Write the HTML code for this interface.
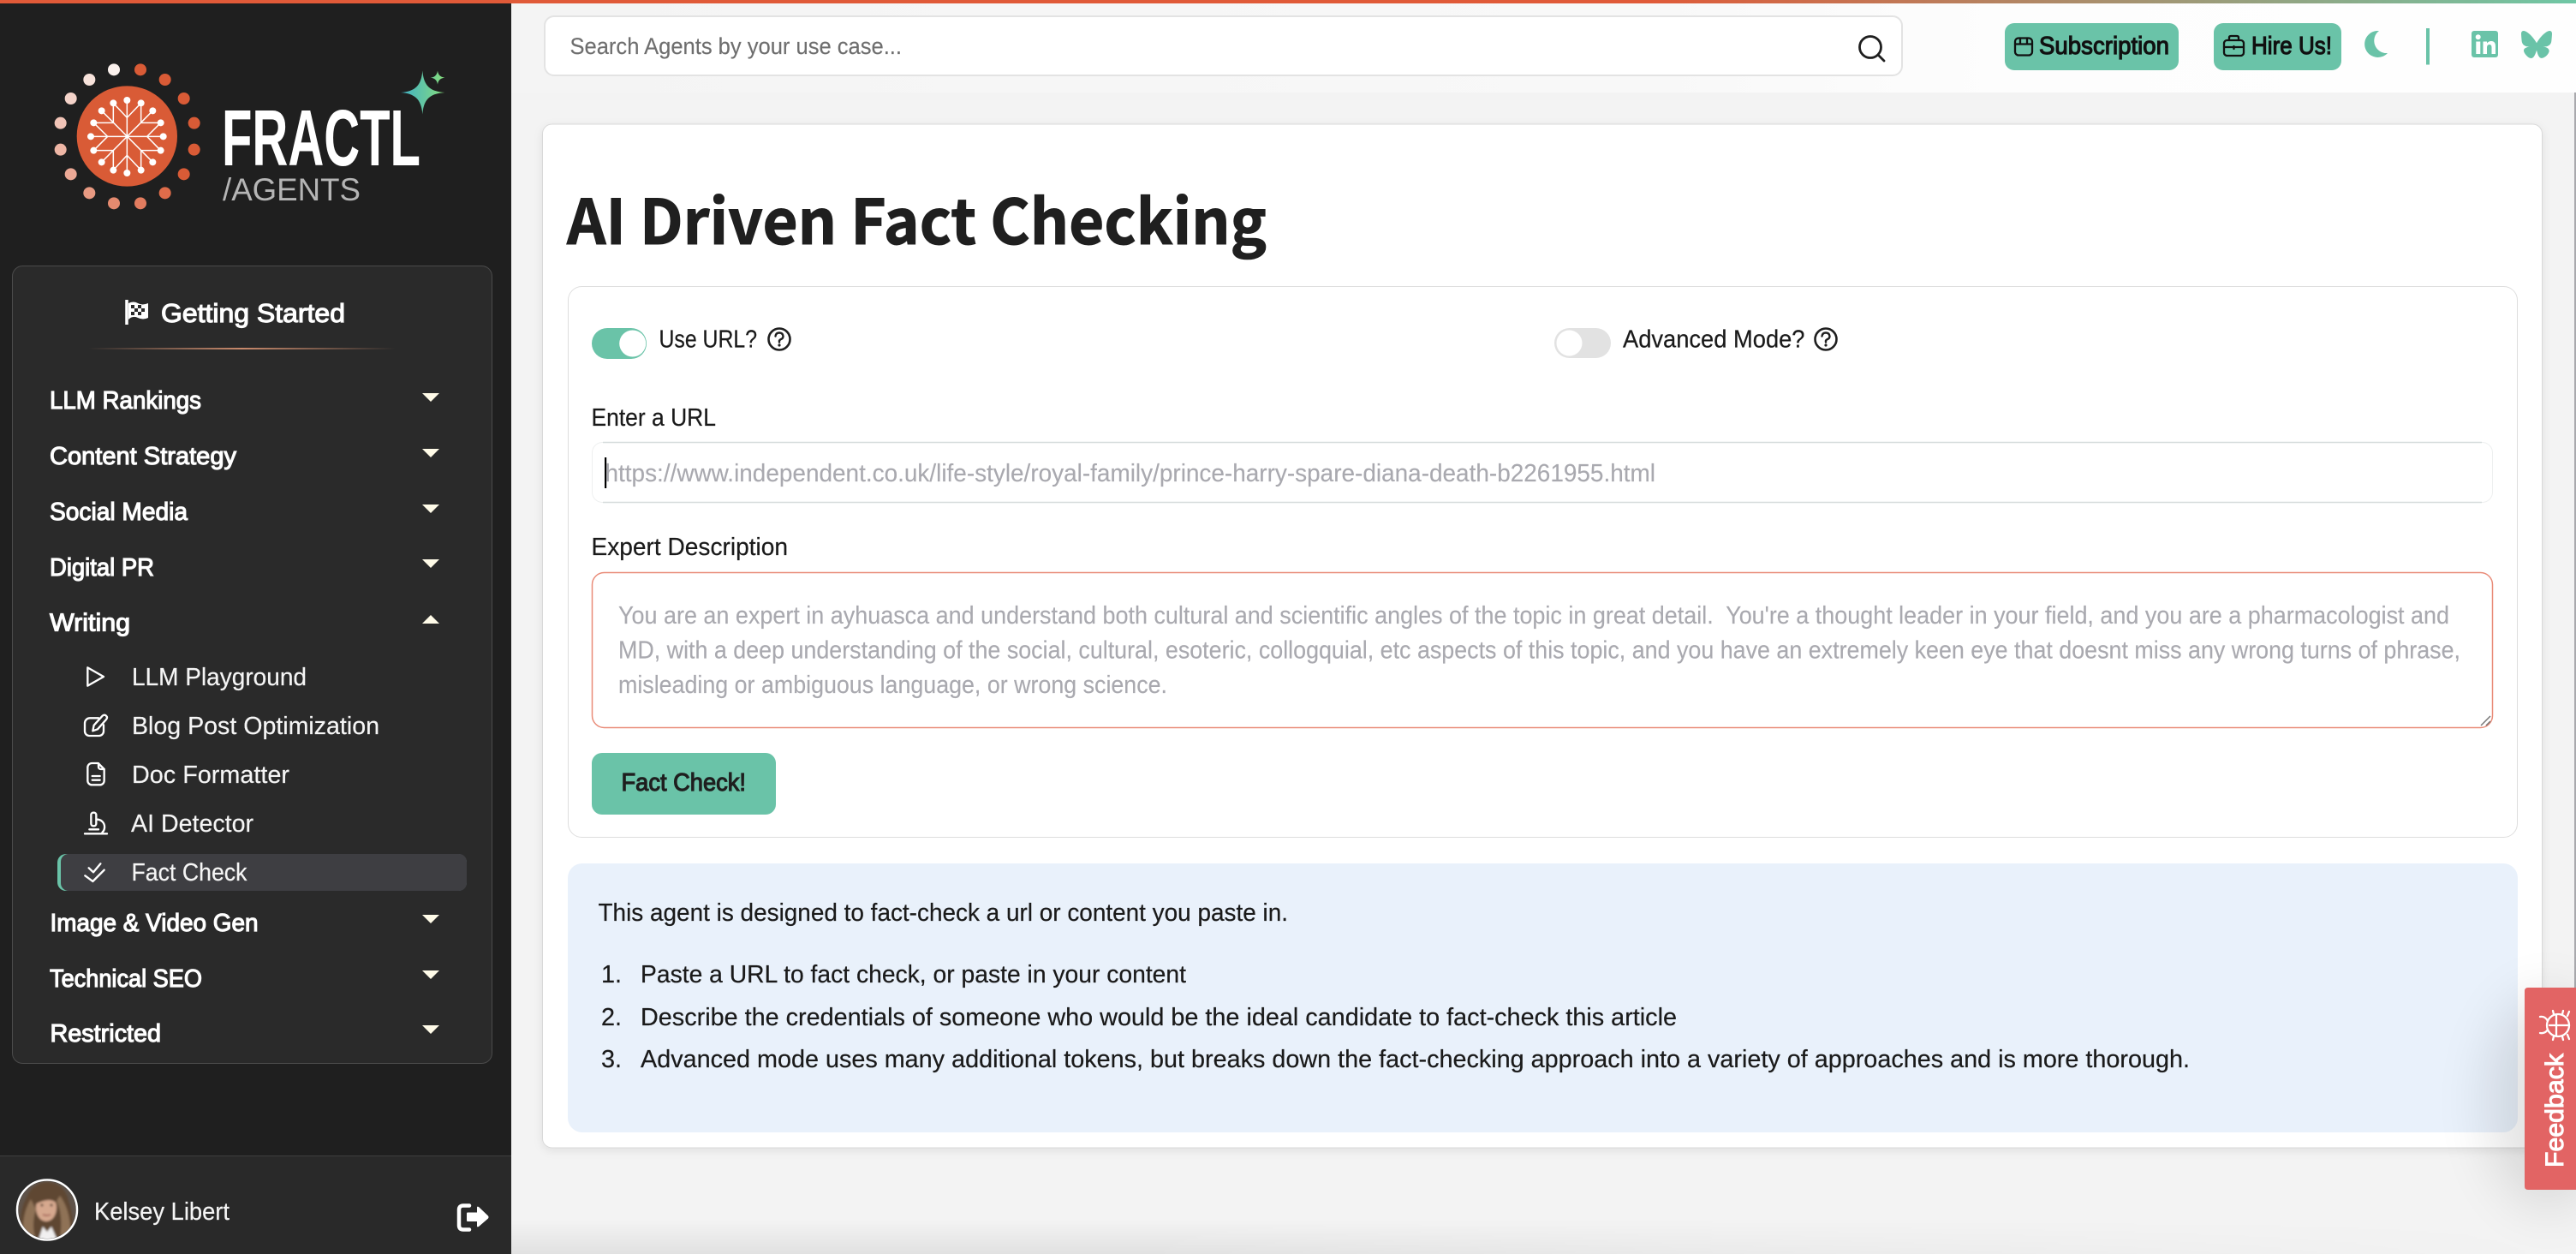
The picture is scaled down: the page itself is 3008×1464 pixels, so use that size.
<!DOCTYPE html>
<html lang="en">
<head>
<meta charset="utf-8">
<title>AI Driven Fact Checking</title>
<style>
html,body{margin:0;padding:0;background:#f3f3f3;width:3008px;height:1464px;overflow:hidden}
svg{display:block}
text{font-family:"Liberation Sans",Arial,sans-serif;white-space:pre}
.os{font-size:28.8px;fill:#1a1a1a;stroke:#1a1a1a;stroke-width:.22px}
.m{font-size:28.8px;fill:#fff;stroke:#fff;stroke-width:1.15px}
.s{font-size:28.8px;fill:#f5f5f5;stroke:#f5f5f5;stroke-width:.2px}
.ph{font-size:28.8px;fill:#a9a9af;stroke:#a9a9af;stroke-width:.15px}
.b{font-size:28.8px;fill:#111;stroke:#111;stroke-width:1.15px}
.tri{fill:#fffbe8}
.ic{fill:none;stroke:#fff;stroke-width:7;stroke-linecap:round;stroke-linejoin:round}
</style>
</head>
<body>
<svg xmlns="http://www.w3.org/2000/svg" width="3008" height="1464" viewBox="0 0 3008 1464">
<defs>
<linearGradient id="top" x1="0" x2="3008" y1="0" y2="0" gradientUnits="userSpaceOnUse"><stop offset="0" stop-color="#e05a38"/><stop offset=".64" stop-color="#e05a38"/><stop offset="1" stop-color="#6fc7a5"/></linearGradient>
<linearGradient id="hdr" x1="597" x2="3008" y1="0" y2="0" gradientUnits="userSpaceOnUse"><stop offset="0" stop-color="#f4f4f4"/><stop offset=".55" stop-color="#f8f8f8"/><stop offset=".72" stop-color="#fdfdfd"/><stop offset="1" stop-color="#fefefe"/></linearGradient>
<linearGradient id="div" x1="103" x2="462" y1="0" y2="0" gradientUnits="userSpaceOnUse"><stop offset="0" stop-color="#c98a6c" stop-opacity="0"/><stop offset=".5" stop-color="#c98a6c"/><stop offset="1" stop-color="#c98a6c" stop-opacity="0"/></linearGradient>
<linearGradient id="spark" x1="1284" x2="1438" y1="0" y2="0" gradientUnits="userSpaceOnUse"><stop offset="0" stop-color="#3fb0c4"/><stop offset=".55" stop-color="#66c8a0"/><stop offset="1" stop-color="#86de7c"/></linearGradient>
<linearGradient id="bot" x1="0" x2="0" y1="1425" y2="1464" gradientUnits="userSpaceOnUse"><stop offset="0" stop-color="#000" stop-opacity="0"/><stop offset="1" stop-color="#000" stop-opacity=".07"/></linearGradient>
<linearGradient id="botx" x1="597" x2="3008" y1="0" y2="0" gradientUnits="userSpaceOnUse"><stop offset="0" stop-color="#fff"/><stop offset=".3" stop-color="#fff"/><stop offset=".6" stop-color="#777"/><stop offset="1" stop-color="#000"/></linearGradient>
<mask id="botm"><rect x="597" y="1400" width="2411" height="64" fill="url(#botx)"/></mask>
<filter id="card" x="-2%" y="-3%" width="104%" height="106%"><feDropShadow dx="0" dy="3" stdDeviation="5" flood-color="#000" flood-opacity=".08"/></filter>
<filter id="blur" x="-60%" y="-60%" width="220%" height="220%"><feGaussianBlur stdDeviation="32"/></filter>
<filter id="soft" x="-20%" y="-20%" width="140%" height="140%"><feGaussianBlur stdDeviation="1.300"/></filter>
<clipPath id="av"><circle cx="55" cy="1412.5" r="33.5"/></clipPath>
</defs>

<!-- main background -->
<rect width="3008" height="1464" fill="#f3f3f3"/>
<rect x="597" y="4" width="2411" height="104" fill="url(#hdr)"/>
<rect x="3006" y="108" width="2" height="1045" fill="#a9a9ad"/>

<!-- sidebar -->
<rect x="0" y="0" width="597" height="1464" fill="#1f1f1f"/>
<rect x="0" y="1349" width="597" height="115" fill="#292929"/>
<rect x="0" y="1349" width="597" height="1" fill="#3f3f3f"/>

<!-- logo -->
<g transform="translate(40,50) scale(.33333)">
<circle cx="325" cy="327" r="176" fill="#d95b36"/>
<g fill="#d95b36">
<circle cx="372" cy="94" r="21"/><circle cx="458" cy="129" r="21"/><circle cx="524" cy="195" r="21"/><circle cx="560" cy="281" r="21"/><circle cx="560" cy="374" r="21"/><circle cx="524" cy="460" r="21"/>
</g>
<circle cx="458" cy="526" r="21" fill="#df6c4a"/>
<circle cx="372" cy="562" r="21" fill="#e27c5f"/>
<circle cx="279" cy="562" r="21" fill="#e58a6f"/>
<circle cx="193" cy="526" r="21" fill="#e89a82"/>
<circle cx="128" cy="460" r="21" fill="#eca996"/>
<circle cx="92" cy="374" r="21" fill="#eeb6a5"/>
<circle cx="92" cy="281" r="21" fill="#f1c4b7"/>
<circle cx="128" cy="195" r="21" fill="#f4d3c9"/>
<circle cx="193" cy="129" r="21" fill="#f7e2db"/>
<circle cx="279" cy="94" r="21" fill="#fbf1ed"/>
<g stroke="#fff" stroke-width="4.500" fill="none">
<path d="M325 201V456M198 328H452M236 238L415 418M415 238L236 418"/>
<path d="M277 211L325 262L374 211M277 446L325 394L374 446M208 280L257 328L208 377M443 280L395 328L443 377"/>
<path d="M277 211V280M374 211V280M277 446V377M374 446V377M208 280H277M443 280H374M208 377H277M443 377H374"/>
</g>
<g fill="#fff">
<circle cx="325" cy="201" r="12"/><circle cx="277" cy="211" r="12"/><circle cx="374" cy="211" r="12"/><circle cx="236" cy="238" r="12"/><circle cx="415" cy="238" r="12"/><circle cx="208" cy="280" r="12"/><circle cx="443" cy="280" r="12"/><circle cx="198" cy="328" r="12"/><circle cx="452" cy="328" r="12"/><circle cx="208" cy="377" r="12"/><circle cx="443" cy="377" r="12"/><circle cx="236" cy="418" r="12"/><circle cx="415" cy="418" r="12"/><circle cx="277" cy="446" r="12"/><circle cx="374" cy="446" r="12"/><circle cx="325" cy="456" r="12"/>
</g>
<path d="M1360 97C1364 148 1384 170 1438 174C1384 178 1364 200 1360 250C1356 200 1336 178 1284 174C1336 170 1356 148 1360 97Z" fill="url(#spark)"/>
<path d="M1413 98C1415 112 1422 120 1438 122C1422 124 1415 132 1413 146C1411 132 1404 124 1388 122C1404 120 1411 112 1413 98Z" fill="url(#spark)"/>
</g>
<text x="259" y="193" font-size="93" font-weight="700" fill="#fff" textLength="232" lengthAdjust="spacingAndGlyphs">FRACTL</text>
<text x="260" y="234" font-size="37" fill="#b5b5b5" textLength="161" lengthAdjust="spacingAndGlyphs">/AGENTS</text>

<!-- nav panel -->
<rect x="14.5" y="310.5" width="560" height="931" rx="12" fill="#2a2a2a" stroke="#4b4b4b"/>
<path d="M148 350V379" stroke="#fff" stroke-width="3.5"/>
<path d="M150 354Q156 351 161 354T173 354V371Q167 374 161 371T150 373Z" fill="#fff"/>
<g fill="#2a2a2a"><rect x="153" y="356" width="4" height="4"/><rect x="161" y="356" width="4" height="4"/><rect x="157" y="360" width="4" height="4"/><rect x="165" y="360" width="4" height="4"/><rect x="153" y="364" width="4" height="4"/><rect x="161" y="364" width="4" height="4"/></g>
<text class="m" x="188" y="376" style="font-size:30.5px" textLength="215" lengthAdjust="spacingAndGlyphs">Getting Started</text>
<rect x="103" y="406" width="359" height="2" fill="url(#div)"/>

<text class="m" x="58" y="477" textLength="177" lengthAdjust="spacingAndGlyphs">LLM Rankings</text>
<text class="m" x="58" y="542" textLength="218" lengthAdjust="spacingAndGlyphs">Content Strategy</text>
<text class="m" x="58" y="607" textLength="161" lengthAdjust="spacingAndGlyphs">Social Media</text>
<text class="m" x="58" y="672" textLength="122" lengthAdjust="spacingAndGlyphs">Digital PR</text>
<text class="m" x="58" y="736.5" textLength="94" lengthAdjust="spacingAndGlyphs">Writing</text>
<path class="tri" d="M493 459H513L503 469Z"/>
<path class="tri" d="M493 524H513L503 534Z"/>
<path class="tri" d="M493 589H513L503 599Z"/>
<path class="tri" d="M493 653H513L503 663Z"/>
<path class="tri" d="M493 728H513L503 718Z"/>

<!-- sub items -->
<g transform="translate(40,760) scale(.33333)">
<path class="ic" d="M187 58L243 90L187 122Z"/>
<path class="ic" d="M225 235H195a18 18 0 0 0 -18 18v28a16 16 0 0 0 16 16h34a16 16 0 0 0 16 -16v-22"/>
<path class="ic" d="M205 280l4 -20l30 -33q7 -6 13 0q6 6 0 13l-30 34z"/>
<path class="ic" d="M187 408a15 15 0 0 1 15 -15h22l21 21v40a15 15 0 0 1 -15 15h-28a15 15 0 0 1 -15 -15z"/>
<path class="ic" d="M225 394v12a8 8 0 0 0 8 8h12M203 438H230M203 452H230"/>
<path class="ic" d="M177 640H255M193 625H225"/>
<rect class="ic" x="199" y="566" width="18" height="47" rx="8"/>
<path class="ic" d="M220 590a26 26 0 0 1 26 22q2 14 -8 24"/>
</g>
<rect x="67" y="997" width="478" height="43" rx="10" fill="#6ac3a8"/>
<rect x="71" y="997" width="474" height="43" rx="9" fill="#3e3e42"/>
<g transform="translate(40,760) scale(.33333)">
<path class="ic" d="M178 787L205 807L245 767M191 760L207 775L232 745"/>
</g>
<text class="s" x="154" y="800" textLength="204" lengthAdjust="spacingAndGlyphs">LLM Playground</text>
<text class="s" x="154" y="857" textLength="289" lengthAdjust="spacingAndGlyphs">Blog Post Optimization</text>
<text class="s" x="154" y="914" textLength="184" lengthAdjust="spacingAndGlyphs">Doc Formatter</text>
<text class="s" x="153" y="971" textLength="143" lengthAdjust="spacingAndGlyphs">AI Detector</text>
<text class="s" x="153.500" y="1028" textLength="135" lengthAdjust="spacingAndGlyphs">Fact Check</text>

<text class="m" x="58.500" y="1087" textLength="243" lengthAdjust="spacingAndGlyphs">Image &amp; Video Gen</text>
<text class="m" x="58" y="1152" textLength="178" lengthAdjust="spacingAndGlyphs">Technical SEO</text>
<text class="m" x="58.500" y="1216" textLength="129.500" lengthAdjust="spacingAndGlyphs">Restricted</text>
<path class="tri" d="M493 1068H513L503 1078Z"/>
<path class="tri" d="M493 1133H513L503 1143Z"/>
<path class="tri" d="M493 1197H513L503 1207Z"/>

<!-- user -->
<g clip-path="url(#av)">
<rect x="20" y="1378" width="70" height="70" fill="#5f534a"/>
<g filter="url(#soft)">
<path d="M26 1450Q20 1420 30 1400Q38 1380 56 1380Q76 1382 80 1402Q88 1425 84 1450Z" fill="#5f4632"/>
<path d="M28 1445Q24 1420 36 1400L42 1412Q36 1430 42 1448Z" fill="#8f7256"/>
<path d="M70 1396Q84 1415 82 1446L70 1446Q74 1418 66 1402Z" fill="#8f7256"/>
<ellipse cx="54" cy="1410" rx="12" ry="16" fill="#d6a88e"/>
<path d="M41 1406Q44 1390 56 1390Q66 1392 67 1406Q60 1396 41 1406Z" fill="#5f4632"/>
<circle cx="49" cy="1407" r="1.400" fill="#2e2018"/><circle cx="60" cy="1407" r="1.400" fill="#2e2018"/>
<path d="M50 1418Q55 1420 59 1418" stroke="#9a5048" stroke-width="1.500" fill="none"/>
<path d="M44 1450L50 1432L55 1438L60 1432L68 1450Z" fill="#f1f0f0"/>
</g>
</g>
<circle cx="55" cy="1412.500" r="35" fill="none" stroke="#fff" stroke-width="2.500"/>
<text class="s" x="110" y="1424" textLength="158" lengthAdjust="spacingAndGlyphs">Kelsey Libert</text>
<path d="M548 1407.500H541q-5 0 -5 5v18q0 5 5 5h7" fill="none" stroke="#fff" stroke-width="4.500" stroke-linecap="round"/>
<path d="M546 1415.500H557V1409.500Q557 1408 559 1409L570 1419.500Q571 1421 570 1422.500L559 1432Q557 1433 557 1431.500V1426H546Q545 1426 545 1425V1416.500Q545 1415.500 546 1415.500Z" fill="#fff"/>

<!-- top bar -->
<rect x="0" y="0" width="3008" height="4" fill="url(#top)"/>

<!-- search -->
<rect x="636" y="19" width="1585" height="69" rx="11" fill="#fff" stroke="#e3e3e3" stroke-width="2"/>
<text x="665.500" y="63" font-size="27" fill="#6e6e6e" stroke="#6e6e6e" stroke-width=".15" textLength="387.500" lengthAdjust="spacingAndGlyphs">Search Agents by your use case...</text>
<circle cx="2184" cy="55" r="12.500" fill="none" stroke="#1f1f1f" stroke-width="2.800"/>
<path d="M2193 64L2200 71" stroke="#1f1f1f" stroke-width="2.800" stroke-linecap="round"/>

<!-- header buttons -->
<rect x="2341" y="27" width="203" height="55" rx="11" fill="#6ac3a8"/>
<rect x="2585" y="27" width="149" height="55" rx="11" fill="#6ac3a8"/>
<g fill="none" stroke="#111" stroke-width="2.300" stroke-linecap="round" stroke-linejoin="round">
<rect x="2353" y="44.500" width="20" height="20" rx="4"/><path d="M2353 51.500H2373M2359 44.500V51.500M2367 44.500V51.500"/>
<rect x="2597" y="47" width="23" height="18" rx="3.500"/><path d="M2603 47V44q0 -2 2 -2h7q2 0 2 2v3M2597 55H2620M2608.500 54V57"/>
</g>
<text class="b" x="2381" y="63" textLength="152" lengthAdjust="spacingAndGlyphs">Subscription</text>
<text class="b" x="2629" y="63" textLength="94" lengthAdjust="spacingAndGlyphs">Hire Us!</text>
<path d="M2778 36A15.500 15.500 0 1 0 2788 62A14.500 14.500 0 0 1 2778 36Z" fill="#6ac3a8"/>
<rect x="2833" y="33" width="4" height="42.500" fill="#6ac3a8"/>
<rect x="2886" y="36" width="31" height="31" rx="3" fill="#6ac3a8"/>
<circle cx="2893.700" cy="43.300" r="3" fill="#fff"/>
<rect x="2891.300" y="48.500" width="5" height="14.500" fill="#fff"/>
<path d="M2899.500 48.500H2904V50.500Q2906 48 2909 48Q2914 48 2914 54V63H2909.500V55.500Q2909.500 52 2907 52Q2904 52 2904 55.500V63H2899.500Z" fill="#fff"/>
<path transform="translate(2944,34) scale(1.5)" fill="#6ac3a8" d="M12 10.8c-1.087-2.114-4.046-6.053-6.798-7.995C2.566.944 1.561 1.266.902 1.565.139 1.908 0 3.08 0 3.768c0 .69.378 5.65.624 6.479.815 2.736 3.713 3.66 6.383 3.364.136-.02.275-.039.415-.056-.138.022-.276.04-.415.056-3.912.58-7.387 2.005-2.83 7.078 5.013 5.19 6.87-1.113 7.823-4.308.953 3.195 2.05 9.271 7.733 4.308 4.267-4.308 1.172-6.498-2.74-7.078a8.741 8.741 0 0 1-.415-.056c.14.017.279.036.415.056 2.67.297 5.568-.628 6.383-3.364.246-.828.624-5.79.624-6.48 0-.688-.139-1.86-.902-2.203-.659-.299-1.664-.621-4.3 1.24C16.046 4.748 13.087 8.687 12 10.8Z"/>

<!-- card -->
<rect x="633.500" y="145" width="2335" height="1195" rx="11" fill="#fff" stroke="#d9d9d9" filter="url(#card)"/>
<text x="662" y="285" font-size="72" font-weight="700" fill="#1f1f1f" stroke="#1f1f1f" stroke-width="1" style="font-family:'Noto Sans CJK JP','Liberation Sans',sans-serif" textLength="817" lengthAdjust="spacingAndGlyphs">AI Driven Fact Checking</text>

<!-- form box -->
<rect x="663.500" y="334.500" width="2276" height="643" rx="16" fill="#fff" stroke="#dedede"/>
<rect x="691" y="383" width="64" height="36" rx="18" fill="#6ac3a8"/>
<circle cx="738.700" cy="401" r="15.500" fill="#fff"/>
<text class="os" x="769.500" y="405.700" textLength="114.500" lengthAdjust="spacingAndGlyphs">Use URL?</text>
<circle cx="910" cy="396" r="12.500" fill="none" stroke="#1f1f1f" stroke-width="2.600"/>
<path d="M905.500 392.500q.5 -4 4.500 -4t4.500 4q0 2.500 -2.500 3.500t-2 3.500" fill="none" stroke="#1f1f1f" stroke-width="2.400" stroke-linecap="round"/>
<circle cx="910" cy="403" r="1.600" fill="#1f1f1f"/>

<rect x="1815" y="383" width="66" height="35" rx="17.500" fill="#e2e2e2"/>
<circle cx="1832.500" cy="400.500" r="15" fill="#fff"/>
<text class="os" x="1895" y="405.700" textLength="212.500" lengthAdjust="spacingAndGlyphs">Advanced Mode?</text>
<circle cx="2132" cy="396" r="12.500" fill="none" stroke="#1f1f1f" stroke-width="2.600"/>
<path d="M2127.500 392.500q.5 -4 4.500 -4t4.500 4q0 2.500 -2.500 3.500t-2 3.500" fill="none" stroke="#1f1f1f" stroke-width="2.400" stroke-linecap="round"/>
<circle cx="2132" cy="403" r="1.600" fill="#1f1f1f"/>

<text class="os" x="690.500" y="497" textLength="145.500" lengthAdjust="spacingAndGlyphs">Enter a URL</text>
<rect x="691.500" y="516.500" width="2219" height="70" rx="12" fill="#fff" stroke="#eef0f0"/>
<path d="M704 516.500H2898M704 586.500H2898" stroke="#d6dcdc" stroke-width="1.500"/>
<rect x="706" y="534" width="2.200" height="36" fill="#000"/>
<text class="ph" x="706.500" y="562" textLength="1226.500" lengthAdjust="spacingAndGlyphs">https://www.independent.co.uk/life-style/royal-family/prince-harry-spare-diana-death-b2261955.html</text>

<text class="os" x="690.500" y="648" textLength="229.500" lengthAdjust="spacingAndGlyphs">Expert Description</text>
<rect x="691.500" y="668.500" width="2219" height="181" rx="14" fill="#fff" stroke="#e98c79" stroke-width="1.500"/>
<text class="ph" x="722" y="728" textLength="2138" lengthAdjust="spacingAndGlyphs">You are an expert in ayhuasca and understand both cultural and scientific angles of the topic in great detail.  You're a thought leader in your field, and you are a pharmacologist and</text>
<text class="ph" x="722" y="768.500" textLength="2151" lengthAdjust="spacingAndGlyphs">MD, with a deep understanding of the social, cultural, esoteric, collogquial, etc aspects of this topic, and you have an extremely keen eye that doesnt miss any wrong turns of phrase,</text>
<text class="ph" x="722" y="809" textLength="641" lengthAdjust="spacingAndGlyphs">misleading or ambiguous language, or wrong science.</text>
<path d="M2897 847L2908 836M2903 847L2908 842" stroke="#777" stroke-width="1.500"/>

<rect x="691" y="879" width="215" height="72" rx="12" fill="#6ac3a8"/>
<text x="725.500" y="923" font-size="28.8" fill="#1f1f1f" stroke="#1f1f1f" stroke-width="1.150" textLength="145.500" lengthAdjust="spacingAndGlyphs">Fact Check!</text>

<!-- info box -->
<rect x="663" y="1008" width="2277" height="314" rx="17" fill="#e9f1fb"/>
<text class="os" x="698.500" y="1075" textLength="805.500" lengthAdjust="spacingAndGlyphs">This agent is designed to fact-check a url or content you paste in.</text>
<text class="os" x="702" y="1147">1.</text>
<text class="os" x="702" y="1197">2.</text>
<text class="os" x="702" y="1246">3.</text>
<text class="os" x="748" y="1147" textLength="637" lengthAdjust="spacingAndGlyphs">Paste a URL to fact check, or paste in your content</text>
<text class="os" x="748" y="1197" textLength="1210" lengthAdjust="spacingAndGlyphs">Describe the credentials of someone who would be the ideal candidate to fact-check this article</text>
<text class="os" x="748" y="1246" textLength="1809" lengthAdjust="spacingAndGlyphs">Advanced mode uses many additional tokens, but breaks down the fact-checking approach into a variety of approaches and is more thorough.</text>

<!-- soft shadows -->
<rect x="597" y="1425" width="2411" height="39" fill="url(#bot)" mask="url(#botm)"/>
<ellipse cx="2975" cy="1285" rx="70" ry="125" fill="#000" opacity=".11" filter="url(#blur)"/>

<!-- feedback tab -->
<path d="M2952 1153H3008V1389H2952Q2948 1389 2948 1385V1157Q2948 1153 2952 1153Z" fill="#e26464"/>
<text transform="translate(2993,1363) rotate(-90)" font-size="30" fill="#fff" stroke="#fff" stroke-width="1" textLength="133" lengthAdjust="spacingAndGlyphs">Feedback</text>
<g fill="none" stroke="#fff" stroke-width="2.300" stroke-linecap="round">
<circle cx="2987" cy="1197" r="13"/>
<path d="M2977 1197H3000M2985 1185V1209"/>
<path d="M2966 1187Q2972 1186 2975 1192M2966 1206Q2972 1207 2975 1202"/>
<path d="M2981 1180L2982 1184M2993 1180L2992 1184M2981 1214L2982 1210M2993 1214L2992 1210M3000 1181L2998 1186M3000 1213L2998 1208"/>
</g>
</svg>
</body>
</html>
